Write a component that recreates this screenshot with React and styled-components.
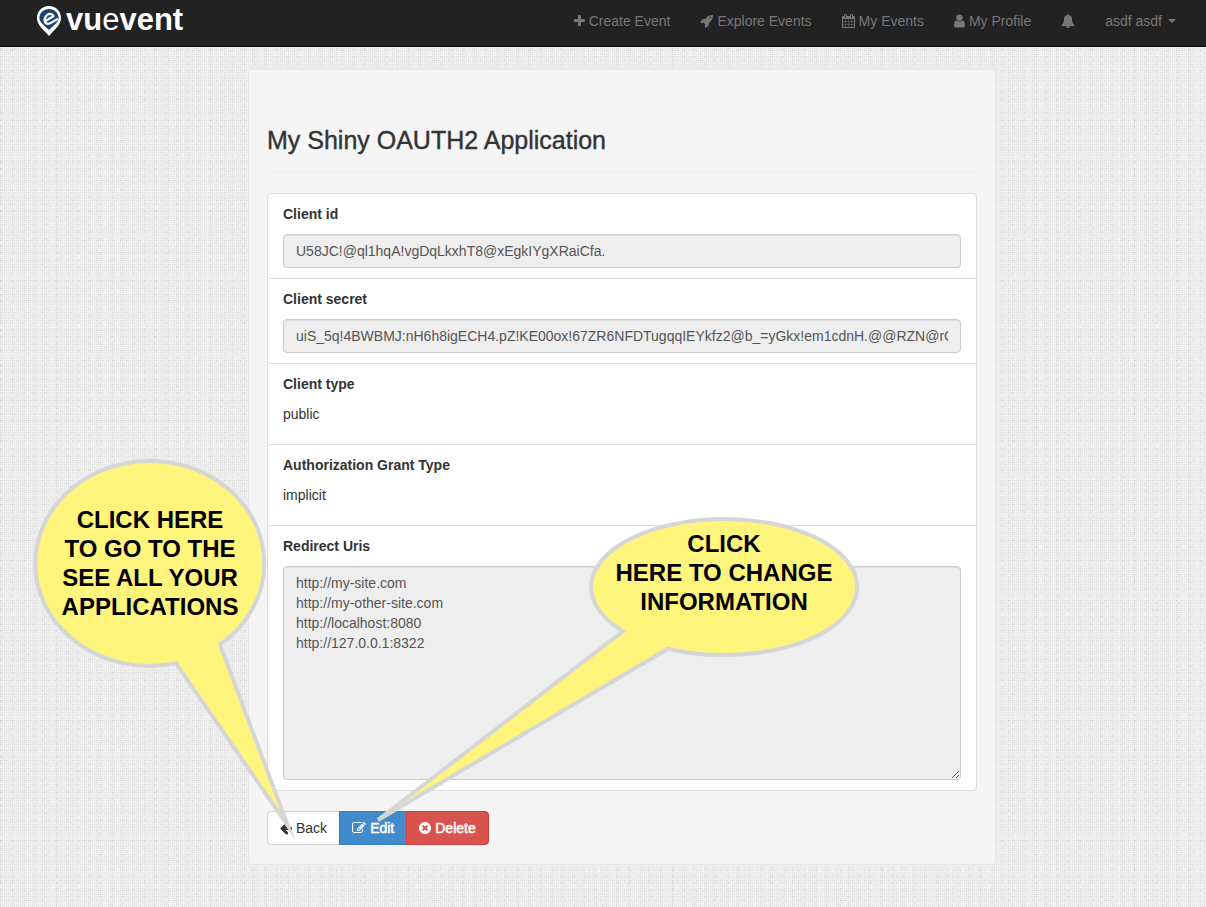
import React from "react";
import styled, { createGlobalStyle, css } from "styled-components";

const GlobalStyle = createGlobalStyle`
  *, *::before, *::after { box-sizing: border-box; }
  body {
    margin: 0;
    background-color: #f0f0f0;
    background-image:
      conic-gradient(from 270deg at 1px 1px, rgba(0, 0, 0, 0.06) 90deg, transparent 0),
      conic-gradient(from 270deg at 1px 1px, rgba(0, 0, 0, 0.08) 90deg, transparent 0),
      conic-gradient(from 270deg at 1px 1px, rgba(0, 0, 0, 0.08) 90deg, transparent 0),
      conic-gradient(from 270deg at 3px 2px, rgba(0, 0, 0, 0.03) 90deg, transparent 0),
      conic-gradient(from 270deg at 2px 5px, rgba(255, 255, 255, 0.3) 90deg, transparent 0);
    background-size: 2px 2px, 6px 10px, 14px 6px, 11px 7px, 13px 17px;
    color: #333;
    font: 14px/20px "Liberation Sans", Arial, sans-serif;
  }
`;

const Page = styled.div`
  position: relative;
  min-height: 100vh;
  padding-bottom: 42px;
`;

const Navbar = styled.header`
  display: flex;
  justify-content: space-between;
  height: 47px;
  padding: 0 15px 0 36px;
  background: #222;
  border-bottom: 1px solid #080808;
`;

const Brand = styled.a`
  display: flex;
  gap: 4px;
  height: 40px;
  padding-top: 5px;
  color: #fff;
  text-decoration: none;
`;

const Pin = styled.svg`
  width: 26px;
  height: 31px;
`;

const Wordmark = styled.span`
  font-size: 31px;
  font-weight: 700;
  line-height: 30px;
`;

const Thin = styled.span`
  font-weight: 400;
`;

const Menu = styled.nav`
  display: flex;
`;

const MenuLink = styled.a`
  display: flex;
  align-items: center;
  gap: 4px;
  height: 42px;
  padding: 0 15px;
  color: #777;
  text-decoration: none;
  white-space: nowrap;
`;

const Glyph = styled.svg`
  width: ${(p) => p.$width}px;
  height: 14px;
  fill: currentColor;
  flex: none;
`;

const Caret = styled.span`
  margin-left: 2px;
  border: 4px solid transparent;
  border-top-color: currentColor;
  border-bottom: 0;
`;

const Content = styled.div`
  padding: 21px 23px 0 61px;
`;

const Well = styled.main`
  width: 66.6667%;
  min-width: 320px;
  margin: 0 auto;
  padding: 19px 18px;
  background: #f5f5f5;
  border: 1px solid #e6e6e6;
  border-radius: 4px;
  box-shadow: inset 0 1px 1px rgba(0, 0, 0, 0.05);
`;

const Title = styled.h1`
  margin: 38px 0 20px;
  padding-bottom: 18px;
  border-bottom: 1px solid #eee;
  font-size: 25px;
  line-height: 28px;
  font-weight: 400;
  -webkit-text-stroke: 0.4px;
`;

const Group = styled.ul`
  margin: 0 0 20px;
  padding: 0;
  list-style: none;
  background: #fff;
  border: 1px solid #ddd;
  border-radius: 4px;
`;

const Item = styled.li`
  padding: 10px 15px;
  & + & { border-top: 1px solid #ddd; }
`;

const Label = styled.label`
  display: block;
  margin-bottom: 10px;
  font-weight: 700;
`;

const Name = styled(Label).attrs({ as: "div" })``;

const Value = styled.p`
  margin: 0 0 10px;
`;

const field = css`
  display: block;
  width: 100%;
  padding: 6px 12px;
  background: #eee;
  border: 1px solid #ccc;
  border-radius: 4px;
  box-shadow: inset 0 1px 1px rgba(0, 0, 0, 0.075);
  color: #555;
  font: inherit;
`;

const Input = styled.input`
  ${field}
  height: 34px;
`;

const TextArea = styled.textarea`
  ${field}
  height: 214px;
  resize: vertical;
`;

const Actions = styled.div`
  display: flex;
`;

const tones = {
  plain: { bg: "#fff", edge: "#ccc", ink: "#333" },
  primary: { bg: "#428bca", edge: "#357ebd", ink: "#fff" },
  danger: { bg: "#d9534f", edge: "#d43f3a", ink: "#fff" },
};

const Button = styled.button`
  display: flex;
  align-items: center;
  gap: 4px;
  height: 34px;
  padding: 0 12px;
  background: ${(p) => tones[p.$tone].bg};
  border: 1px solid ${(p) => tones[p.$tone].edge};
  color: ${(p) => tones[p.$tone].ink};
  font: inherit;
  -webkit-text-stroke: ${(p) => (p.$tone === "plain" ? "0" : "0.5px")};
  cursor: pointer;
  & + & { margin-left: -1px; }
  &:first-child { border-radius: 4px 0 0 4px; }
  &:last-child { border-radius: 0 4px 4px 0; }
`;

const Callout = styled.aside`
  position: absolute;
  left: ${(p) => p.$left};
  top: ${(p) => p.$top}px;
  width: ${(p) => p.$width}px;
  pointer-events: none;
`;

const Balloon = styled.svg`
  display: block;
  width: 100%;
  overflow: visible;
  fill: #fff57d;
  stroke: #d6d6d6;
  stroke-width: 4px;
  stroke-miterlimit: ${(p) => (p.$blunt ? 4 : 20)};
`;

const CalloutText = styled.p`
  position: absolute;
  left: 0;
  top: ${(p) => p.$top}px;
  width: ${(p) => p.$width}px;
  margin: 0 0 0 ${(p) => p.$indent || 0}px;
  color: #000;
  font-size: 24px;
  line-height: 29px;
  font-weight: 700;
  text-align: center;
  white-space: pre-line;
`;

const icons = {
  plus: {
    width: 11,
    box: "192 0 1408 1792",
    d: "M1600 736v192q0 40-28 68t-68 28h-416v416q0 40-28 68t-68 28h-192q-40 0-68-28t-28-68v-416h-416q-40 0-68-28t-28-68v-192q0-40 28-68t68-28h416v-416q0-40 28-68t68-28h192q40 0 68 28t28 68v416h416q40 0 68 28t28 68z",
  },
  rocket: {
    width: 13,
    box: "0 0 1664 1792",
    d: "M1440 448q0-40-28-68t-68-28-68 28-28 68 28 68 68 28 68-28 28-68zm224-288q0 249-75.5 430.5t-253.5 360.5q-81 80-195 176l-20 379q-2 16-16 26l-384 224q-7 4-16 4-12 0-23-9l-64-64q-13-14-8-32l85-276-281-281-276 85q-3 1-9 1-14 0-23-9l-64-64q-17-19-5-39l224-384q10-14 26-16l379-20q96-114 176-195 188-187 358-258t431-71q14 0 24 9.5t10 22.5z",
  },
  calendar: {
    width: 13,
    box: "64 0 1664 1792",
    d: "M192 1664h288v-288h-288v288zm352 0h320v-288h-320v288zm-352-352h288v-320h-288v320zm352 0h320v-320h-320v320zm-352-384h288v-288h-288v288zm736 736h320v-288h-320v288zm-384-736h320v-288h-320v288zm768 736h288v-288h-288v288zm-384-352h320v-320h-320v320zm-352-864v-288q0-13-9.5-22.5t-22.5-9.5h-64q-13 0-22.5 9.5t-9.5 22.5v288q0 13 9.5 22.5t22.5 9.5h64q13 0 22.5-9.5t9.5-22.5zm736 864h288v-320h-288v320zm-384-384h320v-288h-320v288zm384 0h288v-288h-288v288zm32-480v-288q0-13-9.5-22.5t-22.5-9.5h-64q-13 0-22.5 9.5t-9.5 22.5v288q0 13 9.5 22.5t22.5 9.5h64q13 0 22.5-9.5t9.5-22.5zm384-64v1280q0 52-38 90t-90 38h-1408q-52 0-90-38t-38-90v-1280q0-52 38-90t90-38h128v-96q0-66 47-113t113-47h64q66 0 113 47t47 113v96h384v-96q0-66 47-113t113-47h64q66 0 113 47t47 113v96h128q52 0 90 38t38 90z",
  },
  user: {
    width: 11,
    box: "256 128 1280 1536",
    d: "M1536 1399q0 109-62.5 187t-150.5 78h-854q-88 0-150.5-78t-62.5-187q0-85 8.5-160.5t31.5-152 58.5-131 94-89 134.5-34.5q131 128 313 128t313-128q76 0 134.5 34.5t94 89 58.5 131 31.5 152 8.5 160.5zm-256-887q0 159-112.5 271.5t-271.5 112.5-271.5-112.5-112.5-271.5 112.5-271.5 271.5-112.5 271.5 112.5 112.5 271.5z",
  },
  bell: {
    width: 14,
    box: "0 0 1792 1792",
    d: "M912 1696q0-16-16-16-59 0-101.5-42.5t-42.5-101.5q0-16-16-16t-16 16q0 73 51.5 124.5t124.5 51.5q16 0 16-16zm816-288q0 52-38 90t-90 38h-448q0 106-75 181t-181 75-181-75-75-181h-448q-52 0-90-38t-38-90q50-42 91-88t85-119.5 74.5-158.5 50-206 19.5-260q0-152 117-282.5t307-158.5q-8-19-8-39 0-40 28-68t68-28 68 28 28 68q0 20-8 39 190 28 307 158.5t117 282.5q0 139 19.5 260t50 206 74.5 158.5 85 119.5 91 88z",
  },
  edit: {
    width: 14,
    box: "0 0 1792 1792",
    d: "M888 1184l116-116-152-152-116 116v56h96v96h56zm440-720q-16-16-33 1l-350 350q-17 17-1 33t33-1l350-350q17-17 1-33zm80 594v190q0 119-84.5 203.5t-203.5 84.5h-832q-119 0-203.5-84.5t-84.5-203.5v-832q0-119 84.5-203.5t203.5-84.5h832q63 0 117 25 15 7 18 23 3 17-9 29l-49 49q-14 14-32 8-23-6-45-6h-832q-66 0-113 47t-47 113v832q0 66 47 113t113 47h832q66 0 113-47t47-113v-126q0-13 9-22l64-64q15-15 35-7t20 29zm-96-738l288 288-672 672h-288v-288zm444 132l-92 92-288-288 92-92q28-28 68-28t68 28l152 152q28 28 28 68t-28 68z",
  },
  remove: {
    width: 12,
    box: "128 0 1536 1792",
    d: "M1277 1122q0-26-19-45l-181-181 181-181q19-19 19-45 0-27-19-46l-90-90q-19-19-46-19-26 0-45 19l-181 181-181-181q-19-19-45-19-27 0-46 19l-90 90q-19 19-19 46 0 26 19 45l181 181-181 181q-19 19-19 45 0 27 19 46l90 90q19 19 46 19 26 0 45-19l181-181 181 181q19 19 45 19 27 0 46-19l90-90q19-19 19-46zm387-226q0 209-103 385.5t-279.5 279.5-385.5 103-385.5-103-279.5-279.5-103-385.5 103-385.5 279.5-279.5 385.5-103 385.5 103 279.5 279.5 103 385.5z",
  },
  back: {
    width: 12,
    box: "128 0 1536 1792",
    d: "M1664 896v128q0 53-32.5 90.5t-84.5 37.5h-704l293 294q38 36 38 90t-38 90l-75 76q-37 37-90 37-52 0-91-37l-651-652q-37-37-37-90 0-52 37-91l651-650q38-38 91-38 52 0 90 38l75 74q38 38 38 91t-38 91l-293 293h704q52 0 84.5 37.5t32.5 90.5z",
  },
};

function Icon({ name }) {
  const { width, box, d } = icons[name];
  return (
    <Glyph $width={width} viewBox={box} aria-hidden="true">
      <path d={d} />
    </Glyph>
  );
}

const uris = [
  "http://my-site.com",
  "http://my-other-site.com",
  "http://localhost:8080",
  "http://127.0.0.1:8322",
].join("\n");

export default function App() {
  return (
    <Page>
      <GlobalStyle />
      <Navbar>
        <Brand href="#" aria-label="vuevent">
          <Pin viewBox="0 0 26 31" aria-hidden="true">
            <path fill="#fff" d="M13 1C6 1 1 6 1 13c0 7 6 11 12 18 6-7 12-11 12-18C25 6 20 1 13 1z" />
            <path fill="#1b4571" d="M13 4C7.500 4 3.400 8 3.400 13c0 4.500 4.600 7 9.600 12 5-5 9.600-7.500 9.600-12C22.600 8 18.500 4 13 4z" />
            <path
              fill="none"
              stroke="#fff"
              strokeWidth="2.200"
              strokeLinejoin="round"
              d="M8.500 16.500L17.500 11.200C16 8 12 8.200 9.800 11.300 7.500 14.500 8.500 18.800 12 18.800 15.500 18.800 17.500 15.500 22 14"
            />
          </Pin>
          <Wordmark>vu<Thin>e</Thin>vent</Wordmark>
        </Brand>
        <Menu>
          <MenuLink href="#"><Icon name="plus" />Create Event</MenuLink>
          <MenuLink href="#"><Icon name="rocket" />Explore Events</MenuLink>
          <MenuLink href="#"><Icon name="calendar" />My Events</MenuLink>
          <MenuLink href="#"><Icon name="user" />My Profile</MenuLink>
          <MenuLink href="#" aria-label="Notifications"><Icon name="bell" /></MenuLink>
          <MenuLink href="#">asdf asdf <Caret /></MenuLink>
        </Menu>
      </Navbar>
      <Content>
        <Well>
          <Title>My Shiny OAUTH2 Application</Title>
          <Group>
            <Item>
              <Label htmlFor="client-id">Client id</Label>
              <Input id="client-id" readOnly defaultValue="U58JC!@ql1hqA!vgDqLkxhT8@xEgkIYgXRaiCfa." />
            </Item>
            <Item>
              <Label htmlFor="client-secret">Client secret</Label>
              <Input id="client-secret" readOnly defaultValue="uiS_5q!4BWBMJ:nH6h8igECH4.pZ!KE00ox!67ZR6NFDTugqqIEYkfz2@b_=yGkx!em1cdnH.@@RZN@rGE" />
            </Item>
            <Item>
              <Name>Client type</Name>
              <Value>public</Value>
            </Item>
            <Item>
              <Name>Authorization Grant Type</Name>
              <Value>implicit</Value>
            </Item>
            <Item>
              <Label htmlFor="redirect-uris">Redirect Uris</Label>
              <TextArea id="redirect-uris" readOnly defaultValue={uris} />
            </Item>
          </Group>
          <Actions>
            <Button type="button" $tone="plain"><Icon name="back" />Back</Button>
            <Button type="button" $tone="primary"><Icon name="edit" />Edit</Button>
            <Button type="button" $tone="danger"><Icon name="remove" />Delete</Button>
          </Actions>
        </Well>
      </Content>
      <Callout $left="calc(50% - 573px)" $top={455} $width={270}>
        <Balloon viewBox="30 455 270 390">
          <path d="M176 663.300A114.500 102.500 0 1 1 220 644.500L288 826Z" />
        </Balloon>
        <CalloutText $top={50} $width={240}>{"CLICK HERE\nTO GO TO THE\nSEE ALL YOUR\nAPPLICATIONS"}</CalloutText>
      </Callout>
      <Callout $left="calc(50% - 233px)" $top={515} $width={492}>
        <Balloon $blunt viewBox="370 515 492 310">
          <path d="M623 631.200A133 68 0 1 1 668 648.700L378 820Z" />
        </Balloon>
        <CalloutText $top={14} $width={266} $indent={221}>{"CLICK\nHERE TO CHANGE\nINFORMATION"}</CalloutText>
      </Callout>
    </Page>
  );
}
